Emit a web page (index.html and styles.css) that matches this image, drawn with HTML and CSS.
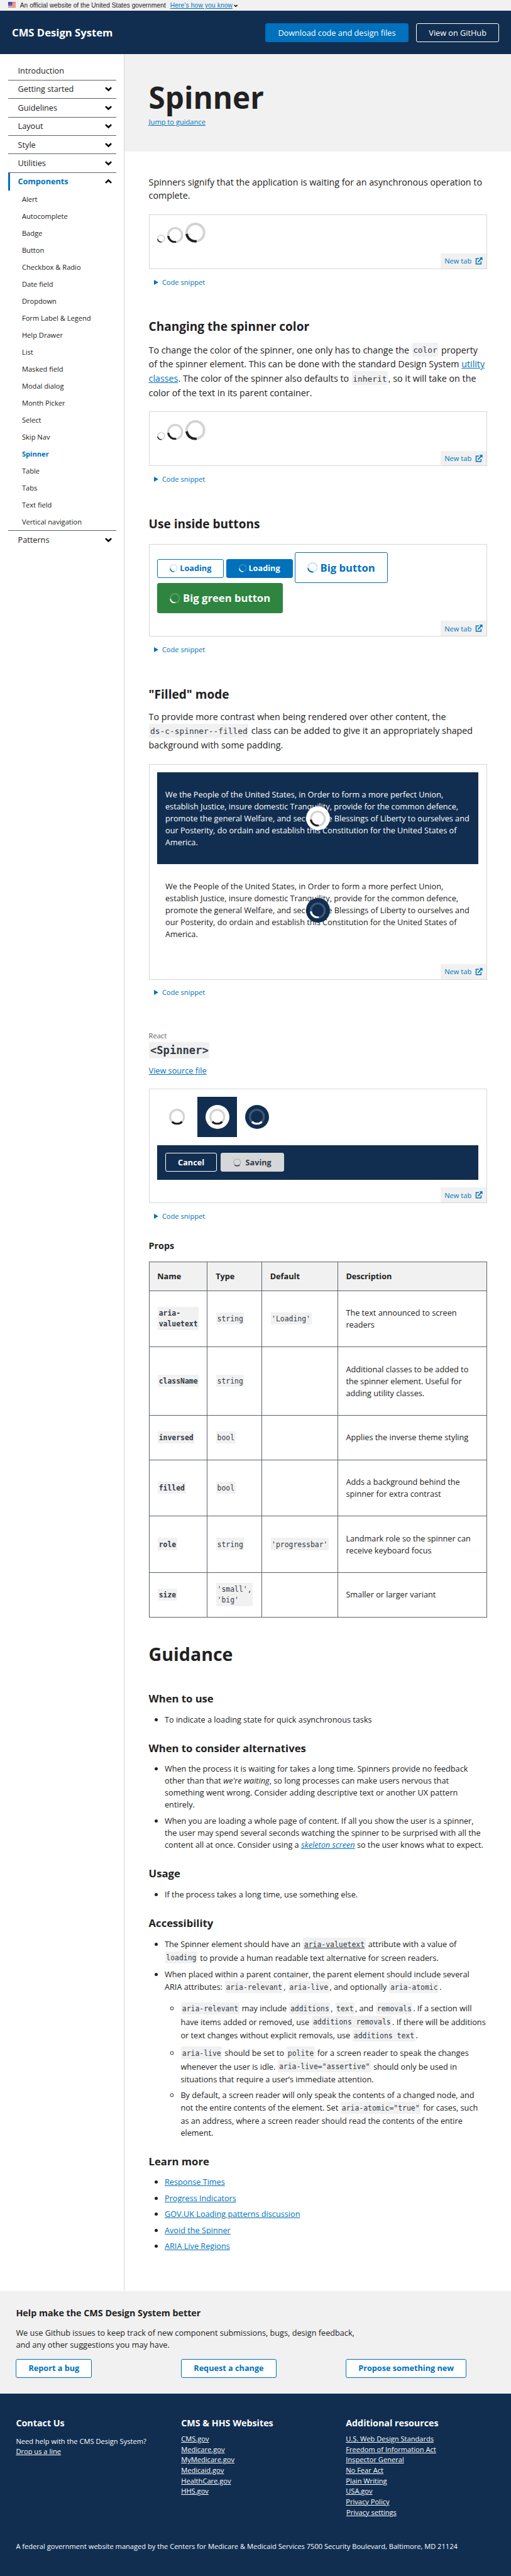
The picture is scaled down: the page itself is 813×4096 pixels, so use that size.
FILE: index.html
```html
<!DOCTYPE html>
<html lang="en">
<head>
<meta charset="utf-8">
<title>Spinner - CMS Design System</title>
<link rel="stylesheet" href="styles.css">
</head>
<body>
<svg width="0" height="0" class="defs">
  <symbol id="down" viewBox="0 0 14 14"><path d="M2.300 5 7 9.500 11.700 5" fill="none" stroke="currentColor" stroke-width="3.200" stroke-linecap="round"/></symbol>
  <symbol id="up" viewBox="0 0 14 14"><path d="M2.300 9 7 4.500 11.700 9" fill="none" stroke="currentColor" stroke-width="3.200" stroke-linecap="round"/></symbol>
  <symbol id="ext" viewBox="0 0 16 16"><path d="M8 3H2v11.500h10.500V9" fill="none" stroke="currentColor" stroke-width="2"/><path d="M6 10.500 13 3" fill="none" stroke="currentColor" stroke-width="2.400"/><path d="M9 .5h6.500V7z" fill="currentColor"/></symbol>
  <symbol id="spin" viewBox="0 0 32 32"><circle cx="16" cy="16" r="14" fill="none" stroke="currentColor" stroke-opacity=".2" stroke-width="4"/><path d="M2 18A14 14 0 0 0 18 29.860" fill="none" stroke="currentColor" stroke-width="4"/></symbol>
  <symbol id="spin-down" viewBox="0 0 32 32"><circle cx="16" cy="16" r="14" fill="none" stroke="currentColor" stroke-opacity=".2" stroke-width="4"/><path d="M6.100 25.900A14 14 0 0 0 25.900 25.900" fill="none" stroke="currentColor" stroke-width="4"/></symbol>
</svg>
<div class="page">
  <div class="banner">
    <svg class="flag" viewBox="0 0 16 11"><path fill="#fff" d="M0 0h16v11H0z"/><path fill="#db3e1f" d="M0 0h16v1H0zM0 2h16v1H0zM0 4h16v1H0zM0 6h16v1H0zM0 8h16v1H0zM0 10h16v1H0z"/><path fill="#1e33b1" d="M0 0h8v7H0z"/><path fill="#fff" d="M1 1h1v1H1zM3.500 1h1v1h-1zM6 1h1v1H6zM2.200 3h1v1h-1zM4.800 3h1v1h-1zM1 5h1v1H1zM3.500 5h1v1h-1zM6 5h1v1H6z"/></svg>
    <span class="banner-text">An official website of the United States government</span>
    <a class="banner-link">Here’s how you know</a><svg class="banner-chev"><use href="#down"/></svg>
  </div>
  <header class="header">
    <div class="brand">CMS Design System</div>
    <div class="header-actions"><a class="hbtn hbtn-primary">Download code and design files</a><a class="hbtn">View on GitHub</a></div>
  </header>
  <div class="body">
    <nav class="side">
      <div class="nav-item">Introduction</div>
      <div class="nav-item">Getting started<svg><use href="#down"/></svg></div>
      <div class="nav-item">Guidelines<svg><use href="#down"/></svg></div>
      <div class="nav-item">Layout<svg><use href="#down"/></svg></div>
      <div class="nav-item">Style<svg><use href="#down"/></svg></div>
      <div class="nav-item">Utilities<svg><use href="#down"/></svg></div>
      <div class="nav-item nav-open"><span>Components</span><svg><use href="#up"/></svg></div>
      <ul class="subnav">
        <li>Alert</li><li>Autocomplete</li><li>Badge</li><li>Button</li><li>Checkbox &amp; Radio</li><li>Date field</li><li>Dropdown</li><li>Form Label &amp; Legend</li><li>Help Drawer</li><li>List</li><li>Masked field</li><li>Modal dialog</li><li>Month Picker</li><li>Select</li><li>Skip Nav</li><li class="current">Spinner</li><li>Table</li><li>Tabs</li><li>Text field</li><li>Vertical navigation</li>
      </ul>
      <div class="nav-item nav-last">Patterns<svg><use href="#down"/></svg></div>
    </nav>
    <main class="main">
      <div class="hero"><h1>Spinner</h1><a class="jump">Jump to guidance</a></div>
      <div class="content">
        <p class="lead intro">Spinners signify that the application is waiting for an asynchronous operation to complete.</p>
        <div class="example ex-spin">
          <div class="spinners"><svg class="s16"><use href="#spin"/></svg><svg class="s32"><use href="#spin"/></svg><svg class="s40"><use href="#spin"/></svg></div>
          <a class="newtab">New tab<svg><use href="#ext"/></svg></a>
        </div>
        <div class="snippet">Code snippet</div>

        <h2 class="t-color">Changing the spinner color</h2>
        <p class="lead p-color">To change the color of the spinner, one only has to change the <code>color</code> property of the spinner element. This can be done with the standard Design System <a>utility classes</a>. The color of the spinner also defaults to <code>inherit</code>, so it will take on the color of the text in its parent container.</p>
        <div class="example ex-spin">
          <div class="spinners"><svg class="s16"><use href="#spin"/></svg><svg class="s32"><use href="#spin"/></svg><svg class="s40"><use href="#spin"/></svg></div>
          <a class="newtab">New tab<svg><use href="#ext"/></svg></a>
        </div>
        <div class="snippet">Code snippet</div>

        <h2 class="t-buttons">Use inside buttons</h2>
        <div class="example ex-buttons">
          <div class="btn-row">
            <a class="btn"><svg><use href="#spin"/></svg>Loading</a><a class="btn btn-primary"><svg><use href="#spin"/></svg>Loading</a><a class="btn btn-big"><svg><use href="#spin"/></svg>Big button</a>
          </div>
          <div class="btn-row"><a class="btn btn-big btn-green"><svg><use href="#spin"/></svg>Big green button</a></div>
          <a class="newtab">New tab<svg><use href="#ext"/></svg></a>
        </div>
        <div class="snippet">Code snippet</div>

        <h2 class="t-filled">"Filled" mode</h2>
        <p class="lead p-filled">To provide more contrast when being rendered over other content, the <code>ds-c-spinner--filled</code> class can be added to give it an appropriately shaped background with some padding.</p>
        <div class="example ex-filled">
          <div class="overlay dark"><p>We the People of the United States, in Order to form a more perfect Union, establish Justice, insure domestic Tranquility, provide for the common defence, promote the general Welfare, and secure the Blessings of Liberty to ourselves and our Posterity, do ordain and establish this Constitution for the United States of America.</p><span class="filled over"><svg><use href="#spin"/></svg></span></div>
          <div class="overlay"><p>We the People of the United States, in Order to form a more perfect Union, establish Justice, insure domestic Tranquility, provide for the common defence, promote the general Welfare, and secure the Blessings of Liberty to ourselves and our Posterity, do ordain and establish this Constitution for the United States of America.</p><span class="filled filled-dark over"><svg><use href="#spin"/></svg></span></div>
          <a class="newtab">New tab<svg><use href="#ext"/></svg></a>
        </div>
        <div class="snippet">Code snippet</div>

        <div class="react">React</div>
        <h2 class="t-react"><code>&lt;Spinner&gt;</code></h2>
        <p class="source"><a>View source file</a></p>
        <div class="example ex-react">
          <div class="cells">
            <div class="cell"><span class="filled"><svg><use href="#spin-down"/></svg></span></div>
            <div class="cell dark"><span class="filled"><svg><use href="#spin-down"/></svg></span></div>
            <div class="cell"><span class="filled filled-dark"><svg><use href="#spin-down"/></svg></span></div>
          </div>
          <div class="bar dark"><a class="btn btn-cancel">Cancel</a><a class="btn btn-saving"><svg><use href="#spin-down"/></svg>Saving</a></div>
          <a class="newtab">New tab<svg><use href="#ext"/></svg></a>
        </div>
        <div class="snippet">Code snippet</div>

        <h3 class="t-props">Props</h3>
        <div class="props">
        <table>
          <colgroup><col class="c1"><col class="c2"><col class="c3"><col></colgroup>
          <tr><th>Name</th><th>Type</th><th>Default</th><th>Description</th></tr>
          <tr class="r2"><td><code>aria-<br>valuetext</code></td><td><code>string</code></td><td><code>'Loading'</code></td><td>The text announced to screen readers</td></tr>
          <tr class="r3"><td><code>className</code></td><td><code>string</code></td><td></td><td>Additional classes to be added to the spinner element. Useful for adding utility classes.</td></tr>
          <tr class="r1"><td><code>inversed</code></td><td><code>bool</code></td><td></td><td>Applies the inverse theme styling</td></tr>
          <tr class="r2"><td><code>filled</code></td><td><code>bool</code></td><td></td><td>Adds a background behind the spinner for extra contrast</td></tr>
          <tr class="r2"><td><code>role</code></td><td><code>string</code></td><td><code>'progressbar'</code></td><td>Landmark role so the spinner can receive keyboard focus</td></tr>
          <tr class="r1"><td><code>size</code></td><td><code>'small',<br>'big'</code></td><td></td><td>Smaller or larger variant</td></tr>
        </table>
        </div>

        <h2 class="t-guidance">Guidance</h2>
        <h3>When to use</h3>
        <ul><li>To indicate a loading state for quick asynchronous tasks</li></ul>
        <h3>When to consider alternatives</h3>
        <ul>
          <li>When the process it is waiting for takes a long time. Spinners provide no feedback other than that <em>we're waiting</em>, so long processes can make users nervous that something went wrong. Consider adding descriptive text or another UX pattern entirely.</li>
          <li>When you are loading a whole page of content. If all you show the user is a spinner, the user may spend several seconds watching the spinner to be surprised with all the content all at once. Consider using a <a><em>skeleton screen</em></a> so the user knows what to expect.</li>
        </ul>
        <h3>Usage</h3>
        <ul><li>If the process takes a long time, use something else.</li></ul>
        <h3>Accessibility</h3>
        <ul>
          <li>The Spinner element should have an <code class="u">aria-valuetext</code> attribute with a value of <code>loading</code> to provide a human readable text alternative for screen readers.</li>
          <li>When placed within a parent container, the parent element should include several ARIA attributes: <code>aria-relevant</code>, <code>aria-live</code>, and optionally <code>aria-atomic</code>.
            <ul>
              <li><code>aria-relevant</code> may include <code>additions</code>, <code>text</code>, and <code>removals</code>. If a section will have items added or removed, use <code>additions removals</code>. If there will be additions or text changes without explicit removals, use <code>additions text</code>.</li>
              <li><code>aria-live</code> should be set to <code>polite</code> for a screen reader to speak the changes whenever the user is idle. <code>aria-live="assertive"</code> should only be used in situations that require a user’s immediate attention.</li>
              <li>By default, a screen reader will only speak the contents of a changed node, and not the entire contents of the element. Set <code>aria-atomic="true"</code> for cases, such as an address, where a screen reader should read the contents of the entire element.</li>
            </ul>
          </li>
        </ul>
        <h3>Learn more</h3>
        <ul><li><a>Response Times</a></li><li><a>Progress Indicators</a></li><li><a>GOV.UK Loading patterns discussion</a></li><li><a>Avoid the Spinner</a></li><li><a>ARIA Live Regions</a></li></ul>
      </div>
    </main>
  </div>
  <section class="feedback">
    <h3>Help make the CMS Design System better</h3>
    <p>We use Github issues to keep track of new component submissions, bugs, design feedback, and any other suggestions you may have.</p>
    <div class="grid3"><div><a class="btn">Report a bug</a></div><div><a class="btn">Request a change</a></div><div><a class="btn">Propose something new</a></div></div>
  </section>
  <footer class="footer">
    <div class="grid3 cols">
      <div><h3>Contact Us</h3><p>Need help with the CMS Design System?<br><a>Drop us a line</a></p></div>
      <div><h3>CMS &amp; HHS Websites</h3><a>CMS.gov</a><br><a>Medicare.gov</a><br><a>MyMedicare.gov</a><br><a>Medicaid.gov</a><br><a>HealthCare.gov</a><br><a>HHS.gov</a></div>
      <div><h3>Additional resources</h3><a>U.S. Web Design Standards</a><br><a>Freedom of Information Act</a><br><a>Inspector General</a><br><a>No Fear Act</a><br><a>Plain Writing</a><br><a>USA.gov</a><br><a>Privacy Policy</a><br><a class="settings">Privacy settings</a></div>
    </div>
    <div class="address">A federal government website managed by the Centers for Medicare &amp; Medicaid Services 7500 Security Boulevard, Baltimore, MD 21124</div>
  </footer>
</div>
</body>
</html>
```
FILE: styles.css
```css
/* 1rem is ten design pixels */
html { font-size: 7.9395px; }
* { box-sizing: border-box; }
body { margin: 0; background: #fff; }
.defs { position: absolute; }
.page {
  width: 813px;
  height: 4096px;
  overflow: hidden;
  font: 1.6rem/2.4rem "Open Sans", sans-serif;
  color: #212121;
}
h1, h2, h3, p, ul { margin: 0; }
a { color: #0071bc; text-decoration: underline; }
svg { flex: none; display: block; }

.banner { height: 2.2rem; background: #f1f1f1; display: flex; align-items: center; padding-left: 1.6rem; font-family: "Liberation Sans", sans-serif; font-size: 1.28rem; line-height: 2.2rem; white-space: nowrap; }
.flag { width: 1.6rem; height: 1.1rem; margin-top: -.3rem; }
.banner-text { margin-left: .8rem; width: 30.1rem; letter-spacing: .006rem; }
.banner-link { letter-spacing: .02rem; }
.banner-chev { width: .8rem; height: .8rem; margin-left: .2rem; color: #000; }

.header { height: 8.6rem; background: #112e51; padding: 0 2.4rem; display: flex; align-items: center; justify-content: space-between; }
.brand { color: #fff; font-size: 2.1rem; font-weight: 700; }
.header-actions { display: flex; gap: 1.6rem; }
.hbtn { height: 3.8rem; border: 1px solid #fff; border-radius: 3px; padding: 0 2.4rem; color: #fff; text-decoration: none; line-height: 3.55rem; }
.hbtn-primary { background: #0071bc; border-color: #0071bc; }

.body { display: flex; height: 448.1rem; }
.side { width: 25rem; flex: none; border-right: 1px solid #d6d7d9; padding: 1.6rem 1.6rem 0; }
.nav-item { height: 3.7rem; border-bottom: 1px solid #5b616b; padding: 0 .8rem 0 2rem; display: flex; align-items: center; justify-content: space-between; }
.nav-item svg { width: 1.4rem; height: 1.4rem; color: #000; }
.nav-open { height: 3.6rem; border-bottom: 0; border-left: .4rem solid #0071bc; padding-left: 1.6rem; color: #0071bc; font-weight: 700; }
.nav-last { border-bottom: 0; border-top: 1px solid #5b616b; }
.subnav { list-style: none; padding: 0; font-size: 1.4rem; }
.subnav li { height: 3.4rem; line-height: 3.4rem; padding-left: 2.8rem; }
.subnav .current { color: #0071bc; font-weight: 700; }

.main { flex: 1; min-width: 0; }
.hero { height: 19.5rem; background: #f1f1f1; padding: 4.8rem 4.8rem 0; }
.hero h1 { font-size: 6rem; line-height: 7.8rem; }
.jump { display: block; width: max-content; font-size: 1.4rem; line-height: 2.1rem; }
.content { padding: 4.8rem 4.8rem 0; }
.lead { font-size: 1.8rem; line-height: 2.7rem; }
.content h2 { font-size: 2.4rem; line-height: 3.1rem; }

code { display: inline-block; font-family: "DejaVu Sans Mono", monospace; font-size: 0.9em; line-height: 1.5; padding: .19em .2rem .01em; margin: .03em .1rem .12em; background: #f1f1f1; color: #323a45; }
li code { margin-bottom: .145em; }
.u { text-decoration: underline; }

.example { border: 1px solid #d6d7d9; padding: 1.6rem 1.6rem 0; position: relative; }
.newtab { position: absolute; right: 0; bottom: 0; width: 9.2rem; height: 3rem; background: #f1f1f1; padding: 0 .7rem 0 .8rem; display: flex; align-items: center; justify-content: space-between; font-size: 1.4rem; text-decoration: none; }
.newtab svg { width: 1.5rem; height: 1.5rem; }
.snippet { display: flex; align-items: center; height: 2.1rem; margin-top: 1.6rem; padding-left: 1rem; font-size: 1.4rem; line-height: 2.1rem; color: #0071bc; }
.snippet::before { content: ""; border-left: 1rem solid #0071bc; border-top: .6rem solid transparent; border-bottom: .6rem solid transparent; margin-right: .8rem; margin-top: -.1rem; }

.intro { height: 5.4rem; margin-bottom: 2.4rem; }
.ex-spin { height: 11rem; }
.spinners { display: flex; align-items: flex-end; gap: .4rem; }
.s16 { width: 1.6rem; height: 1.6rem; }
.s32 { width: 3.2rem; height: 3.2rem; }
.s40 { width: 4rem; height: 4rem; }
.t-color { margin-top: 6.3rem; }
.p-color { height: 11.4rem; margin: 1.6rem 0 2.4rem; }
.t-buttons { margin-top: 6.35rem; }
.ex-buttons { height: 18.6rem; margin-top: 2.35rem; }
.btn-row { display: flex; align-items: center; gap: .4rem; }
.btn { display: inline-flex; align-items: center; height: 3.8rem; border: 1px solid #0071bc; border-radius: 3px; background: #fff; color: #0071bc; padding: 0 2.4rem; line-height: 2.2rem; font-weight: 700; text-decoration: none; }
.btn svg { width: 1.6rem; height: 1.6rem; margin-right: .4rem; }
.btn-row .btn { margin-top: .3rem; }
.btn-row .btn-big { margin-top: 0; }
.btn-primary { background: #0071bc; color: #fff; }
.btn-big { height: 6.1rem; font-size: 2.1rem; }
.btn-big svg { width: 2.1rem; height: 2.1rem; margin-right: .5rem; }
.btn-green { background: #2e8540; border-color: #2e8540; color: #fff; }
.t-filled { margin-top: 6.3rem; }
.p-filled { height: 8.4rem; margin: 1.6rem 0 2.4rem; }
.ex-filled { height: 43.2rem; }
.dark { background: #112e51; color: #fff; }
.overlay { height: 18.4rem; padding: 3.2rem 1.6rem; position: relative; }
.filled { width: 4.8rem; height: 4.8rem; border-radius: 50%; background: #fff; color: #212121; padding: .8rem; display: block; }
.filled svg { width: 3.2rem; height: 3.2rem; }
.filled-dark { background: #112e51; color: #fff; }
.over { position: absolute; left: 50%; top: 50%; transform: translate(-50%, -50%); }
.react { margin-top: 6.5rem; font-size: 1.4rem; line-height: 2.1rem; color: #5b616b; }
.t-react { height: 3.5rem; padding-top: .2rem; display: flex; align-items: flex-start; }
.t-react code { line-height: 1.3; padding: .1em .2rem; margin: 0 .1rem; }
.source { margin: 1.2rem 0 2.4rem; }
.ex-react { height: 23rem; }
.cells { display: flex; }
.cell { width: 8rem; height: 8rem; padding: 1.6rem; }
.bar { height: 7rem; margin-top: 1.6rem; padding: 1.6rem; display: flex; gap: .8rem; }
.btn-cancel { background: transparent; color: #fff; border-color: #fff; }
.btn-saving { background: #d6d7d9; border-color: #d6d7d9; color: #323a45; }
.btn-saving svg { margin-right: .8rem; }

.content .t-props { font-size: 1.8rem; line-height: 2.3rem; margin: 3.65rem 0 2.05rem; }
.props { height: 71.2rem; }
table { width: 67.8rem; border-collapse: collapse; table-layout: fixed; }
.c1 { width: 11.7rem; }
.c2 { width: 10.9rem; }
.c3 { width: 15.2rem; }
th, td { border: 1px solid #5b616b; padding: 0 1.6rem; text-align: left; }
th { height: 5.72rem; background: #f1f1f1; }
td:first-child code { font-weight: 700; }
.r1 td { height: 8.89rem; }
.r2 td { height: 11.29rem; }
.r3 td { height: 13.73rem; }

.content .t-guidance { font-size: 3.6rem; line-height: 4.7rem; margin-top: 5.05rem; }
.content h3 { font-size: 2.1rem; line-height: 2.7rem; margin: 3.15rem 0 1.65rem; }
.content .t-guidance + h3 { margin-top: 5.2rem; }
.content ul { padding-left: 3.2rem; }
.content li { margin-bottom: .8rem; }
.content li ul { margin-top: 1.6rem; }

.feedback { height: 20.5rem; background: #f1f1f1; padding: 3.2rem 3.2rem 0; }
.feedback h3 { font-size: 1.8rem; line-height: 2.3rem; }
.feedback p { width: 69rem; margin: 1.6rem 0; }
.grid3 { display: grid; grid-template-columns: 33.1rem 33rem 1fr; }
.footer { height: 36.6rem; background: #112e51; color: #fff; padding: 4.8rem 3.2rem 0; font-size: 1.4rem; line-height: 2.1rem; }
.footer a { color: #fff; }
.footer h3 { font-size: 1.8rem; line-height: 2.3rem; margin-bottom: .95rem; }
.cols { height: 24.8rem; }
.footer p { margin-top: 1.4rem; }
.settings { margin-left: .1rem; }
.address { white-space: nowrap; }
```
